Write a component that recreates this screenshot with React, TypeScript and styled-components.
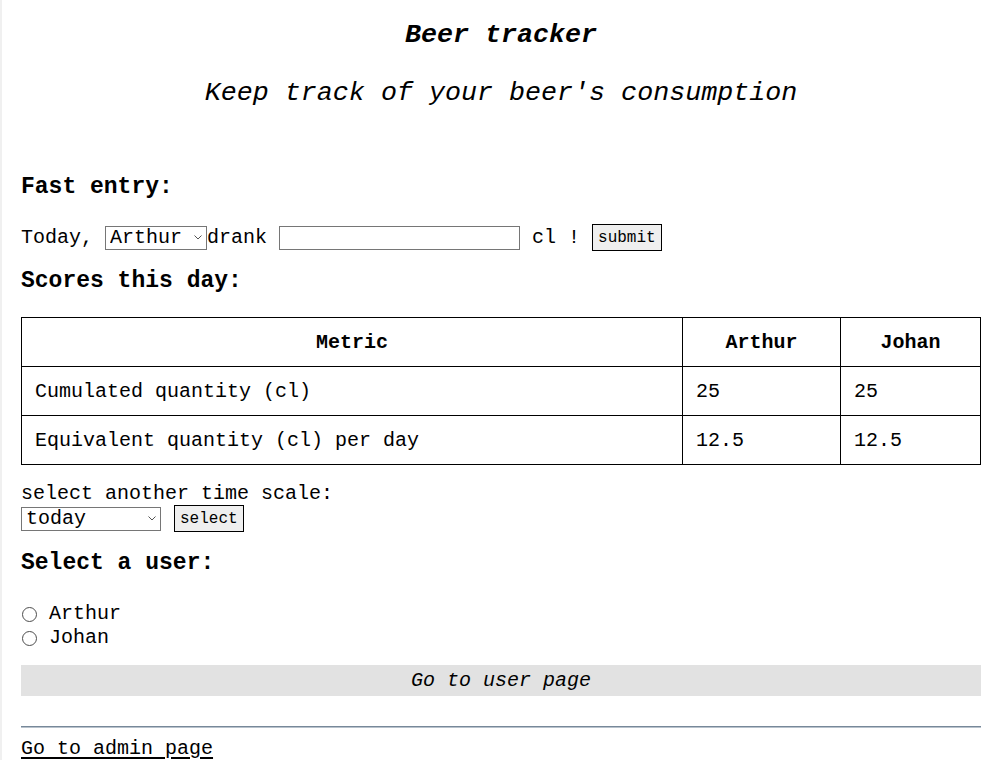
import styled, { createGlobalStyle } from 'styled-components';

const GlobalStyle = createGlobalStyle`
  html, body {
    margin: 0;
    padding: 0;
    background: #fff;
  }
  body {
    border-left: 2px solid #f0f0f0;
    font-family: "Liberation Mono", "Courier New", monospace;
    font-size: 20px;
    color: #000;
  }
`;

const Page = styled.div`
  width: 960px;
  margin: 0 auto;
  padding-left: 1px;
  display: flex;
  flex-direction: column;
`;

const Header = styled.header`
  display: flex;
  flex-direction: column;
  align-items: center;
  padding-top: 20px;
`;

const Title = styled.h1`
  margin: 0;
  font-size: 26.7px;
  line-height: 31px;
  font-weight: bold;
  font-style: italic;
`;

const Subtitle = styled.h2`
  margin: 27px 0 0;
  font-size: 26.7px;
  line-height: 31px;
  font-weight: normal;
  font-style: italic;
`;

const Heading = styled.h3<{ $top: number }>`
  margin: ${p => p.$top}px 0 0;
  font-size: 23px;
  line-height: 26px;
  font-weight: bold;
`;

const EntryRow = styled.form`
  margin-top: 24px;
  display: flex;
  align-items: center;
  height: 27px;
  line-height: 23px;
  white-space: pre;
`;

const SelectWrap = styled.span<{ $width: number }>`
  position: relative;
  display: inline-flex;
  width: ${p => p.$width}px;
  height: 24px;
`;

const Select = styled.select`
  appearance: none;
  width: 100%;
  height: 100%;
  box-sizing: border-box;
  font-family: "Liberation Mono", "Courier New", monospace;
  font-size: 20px;
  line-height: 22px;
  color: #000;
  background: #fff;
  border: 1px solid #767676;
  border-radius: 0;
  padding: 0 18px 0 4px;
  margin: 0;
`;

const Chevron = styled.svg`
  position: absolute;
  right: 5px;
  top: 9px;
  width: 8px;
  height: 5px;
  pointer-events: none;
`;

const TextInput = styled.input`
  width: 241px;
  height: 24px;
  box-sizing: border-box;
  border: 1px solid #767676;
  margin: 0;
  padding: 1px 2px;
  font-family: "Liberation Mono", "Courier New", monospace;
  font-size: 20px;
`;

const Button = styled.button`
  height: 27px;
  box-sizing: border-box;
  padding: 0 5px;
  margin: 0;
  font-family: "Liberation Mono", "Courier New", monospace;
  font-size: 16px;
  color: #000;
  background: #efefef;
  border: 1px solid #000;
  border-radius: 0;
`;

const Table = styled.table`
  margin-top: 23px;
  width: 960px;
  border-collapse: collapse;
  font-size: 20px;
  line-height: 23px;
`;

const HeadCell = styled.th<{ $width?: number }>`
  border: 1px solid #000;
  height: 49px;
  padding: 0 13px;
  text-align: center;
  font-weight: bold;
  width: ${p => (p.$width ? `${p.$width}px` : 'auto')};
  box-sizing: border-box;
`;

const Cell = styled.td`
  border: 1px solid #000;
  height: 49px;
  box-sizing: border-box;
  padding: 0 13px;
  text-align: left;
`;

const ScaleBlock = styled.form`
  margin-top: 17px;
  display: flex;
  flex-direction: column;
  line-height: 23px;
`;

const ScaleRow = styled.div`
  display: flex;
  align-items: center;
  gap: 13px;
`;

const RadioList = styled.div`
  margin-top: 26px;
  display: flex;
  flex-direction: column;
`;

const RadioLabel = styled.label`
  display: flex;
  align-items: center;
  height: 24px;
  line-height: 24px;
`;

const Radio = styled.input`
  appearance: none;
  width: 15px;
  height: 15px;
  box-sizing: border-box;
  border: 1px solid #4d4d4d;
  border-radius: 50%;
  background: #fff;
  margin: 0 12px 0 1px;
  &:checked {
    background: radial-gradient(circle, #000 0 3px, #fff 3.5px);
  }
`;

const UserButton = styled.div`
  margin-top: 15px;
  height: 31px;
  background: #e2e2e2;
  display: flex;
  align-items: center;
  justify-content: center;
  font-style: italic;
`;

const Rule = styled.hr`
  margin: 30px 0 0;
  border: none;
  border-top: 1px solid #778899;
  height: 1px;
  background: #b8c2cc;
`;

const AdminLink = styled.a`
  margin-top: 9px;
  align-self: flex-start;
  color: #000;
  line-height: 23px;
  text-decoration: underline;
  text-underline-offset: 3px;
`;

const users = ['Arthur', 'Johan'];

const rows = [
  { metric: 'Cumulated quantity (cl)', values: ['25', '25'] },
  { metric: 'Equivalent quantity (cl) per day', values: ['12.5', '12.5'] },
];

const Dropdown = ({ width, value, options }: { width: number; value: string; options: string[] }) => (
  <SelectWrap $width={width}>
    <Select defaultValue={value}>
      {options.map(o => (
        <option key={o}>{o}</option>
      ))}
    </Select>
    <Chevron viewBox="0 0 8 5">
      <path d="M0.5 0.5 L4 4 L7.5 0.5" fill="none" stroke="#555" strokeWidth="1" />
    </Chevron>
  </SelectWrap>
);

const App = () => {
  return (
    <>
      <GlobalStyle />
      <Page>
        <Header>
          <Title>Beer tracker</Title>
          <Subtitle>Keep track of your beer's consumption</Subtitle>
        </Header>

        <Heading $top={65}>Fast entry:</Heading>
        <EntryRow onSubmit={e => e.preventDefault()}>
          <span>Today, </span>
          <Dropdown width={102} value="Arthur" options={users} />
          <span>drank </span>
          <TextInput type="text" />
          <span> cl ! </span>
          <Button type="submit">submit</Button>
        </EntryRow>

        <Heading $top={17}>Scores this day:</Heading>
        <Table>
          <thead>
            <tr>
              <HeadCell>Metric</HeadCell>
              <HeadCell $width={158}>Arthur</HeadCell>
              <HeadCell $width={140}>Johan</HeadCell>
            </tr>
          </thead>
          <tbody>
            {rows.map(r => (
              <tr key={r.metric}>
                <Cell>{r.metric}</Cell>
                {r.values.map((v, i) => (
                  <Cell key={i}>{v}</Cell>
                ))}
              </tr>
            ))}
          </tbody>
        </Table>

        <ScaleBlock onSubmit={e => e.preventDefault()}>
          <span>select another time scale:</span>
          <ScaleRow>
            <Dropdown width={140} value="today" options={['today', 'this week', 'this month']} />
            <Button type="submit">select</Button>
          </ScaleRow>
        </ScaleBlock>

        <Heading $top={18}>Select a user:</Heading>
        <RadioList>
          {users.map(u => (
            <RadioLabel key={u}>
              <Radio type="radio" name="user" />
              {u}
            </RadioLabel>
          ))}
        </RadioList>
        <UserButton>Go to user page</UserButton>

        <Rule />
        <AdminLink href="#">Go to admin page</AdminLink>
      </Page>
    </>
  );
};

export default App;
